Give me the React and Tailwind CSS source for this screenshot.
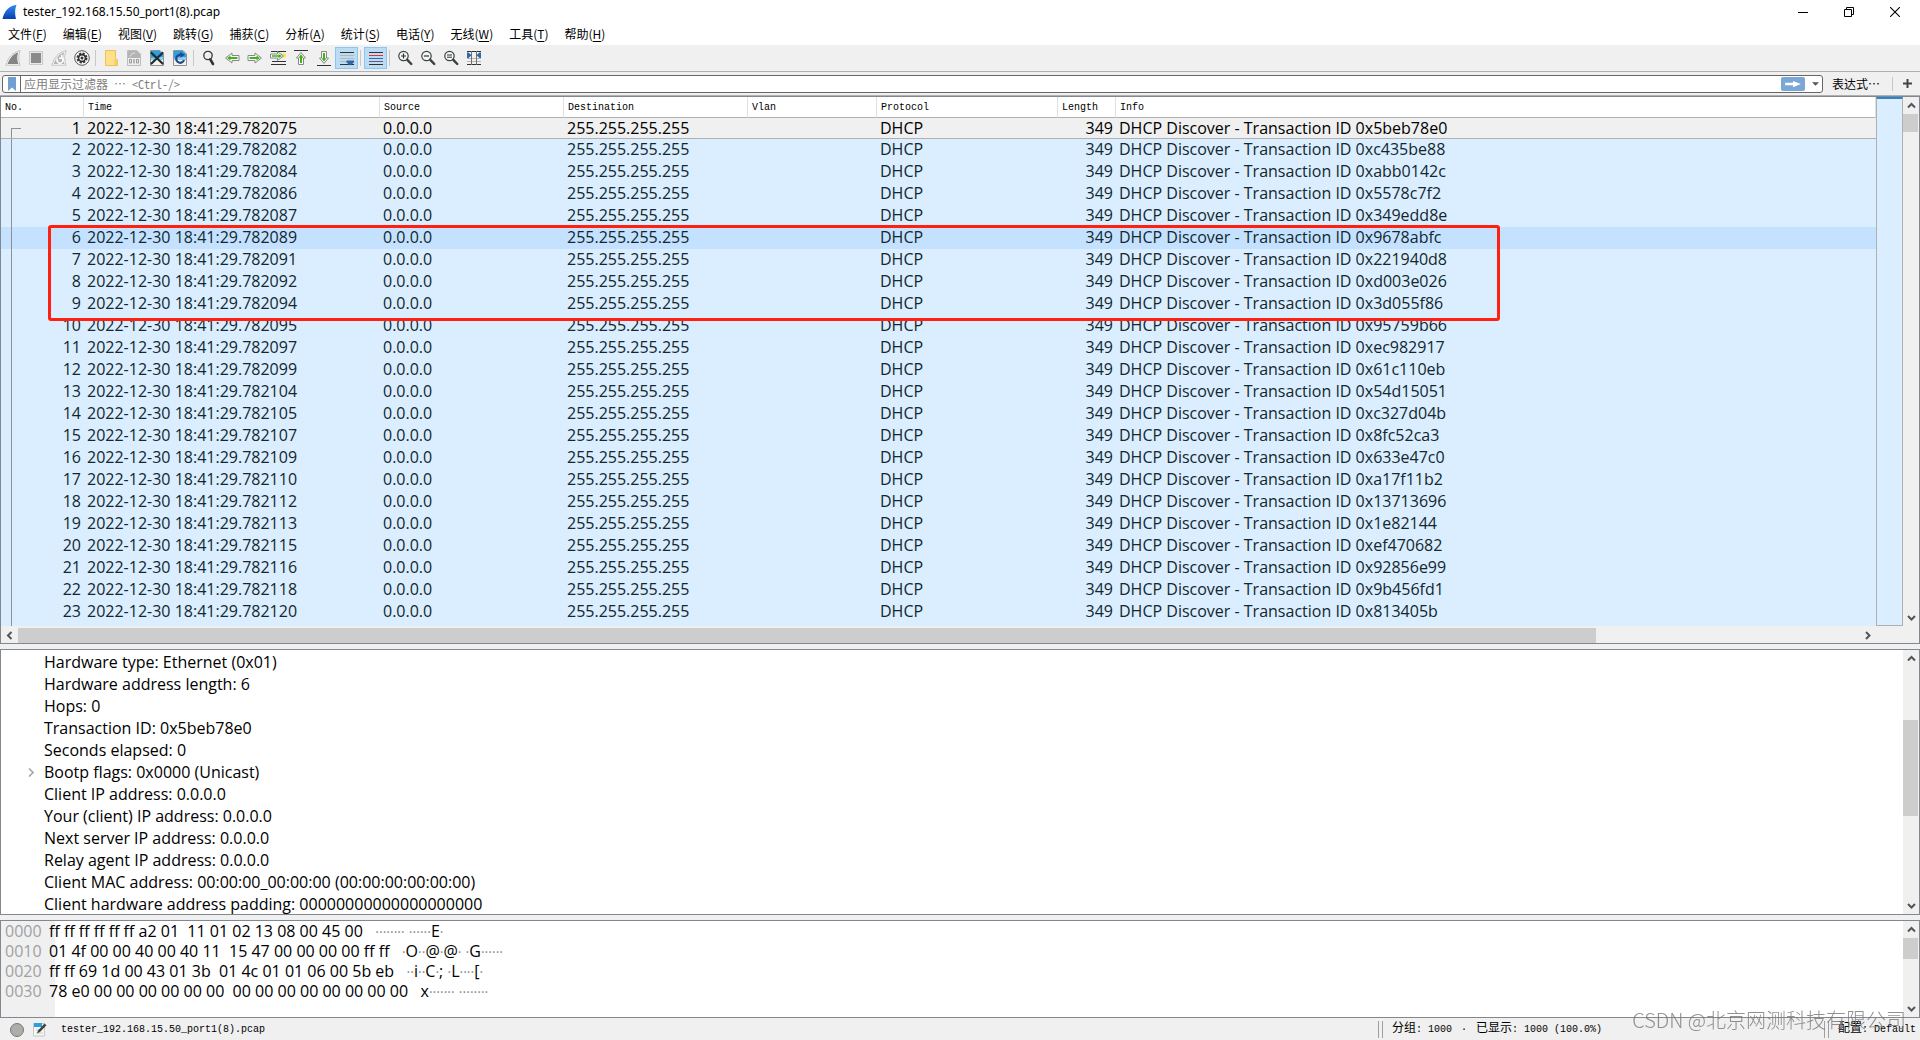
import React, { useState } from 'react';
import clsx from 'clsx';

const menus = [
    ['文件', 'F'], ['编辑', 'E'], ['视图', 'V'], ['跳转', 'G'], ['捕获', 'C'], ['分析', 'A'],
    ['统计', 'S'], ['电话', 'Y'], ['无线', 'W'], ['工具', 'T'], ['帮助', 'H'],
];

// [time fraction, transaction id]
const packets = [
    ['782075', '5beb78e0'], ['782082', 'c435be88'], ['782084', 'abb0142c'], ['782086', '5578c7f2'],
    ['782087', '349edd8e'], ['782089', '9678abfc'], ['782091', '221940d8'], ['782092', 'd003e026'],
    ['782094', '3d055f86'], ['782095', '95759b66'], ['782097', 'ec982917'], ['782099', '61c110eb'],
    ['782104', '54d15051'], ['782105', 'c327d04b'], ['782107', '8fc52ca3'], ['782109', '633e47c0'],
    ['782110', 'a17f11b2'], ['782112', '13713696'], ['782113', '1e82144'], ['782115', 'ef470682'],
    ['782116', '92856e99'], ['782118', '9b456fd1'], ['782120', '813405b'], ['782121', 'd4b1f7a6'],
];

const details = [
    'Hardware type: Ethernet (0x01)',
    'Hardware address length: 6',
    'Hops: 0',
    'Transaction ID: 0x5beb78e0',
    'Seconds elapsed: 0',
    'Bootp flags: 0x0000 (Unicast)',
    'Client IP address: 0.0.0.0',
    'Your (client) IP address: 0.0.0.0',
    'Next server IP address: 0.0.0.0',
    'Relay agent IP address: 0.0.0.0',
    'Client MAC address: 00:00:00_00:00:00 (00:00:00:00:00:00)',
    'Client hardware address padding: 00000000000000000000',
];

const bytes = [
    ['0000', 'ff ff ff ff ff ff a2 01  11 01 02 13 08 00 45 00', '········ ······E·'],
    ['0010', '01 4f 00 00 40 00 40 11  15 47 00 00 00 00 ff ff', '·O··@·@· ·G······'],
    ['0020', 'ff ff 69 1d 00 43 01 3b  01 4c 01 01 06 00 5b eb', '··i··C·; ·L····[·'],
    ['0030', '78 e0 00 00 00 00 00 00  00 00 00 00 00 00 00 00', 'x······· ········'],
];

const arrowRight = 'M1 6h7V3l7 5-7 5v-3H1z';
const magnifier = (
    <>
        <circle cx="6.5" cy="6" r="4.7" fill="#f4f6f6" stroke="#3a4244" strokeWidth="1.2" />
        <path d="M10.3 9.8l4 4.2" stroke="#3a3f40" strokeWidth="2.4" strokeLinecap="round" />
    </>
);
const page = (
    <>
        <path d="M1.500 .5h9.500l3.500 3.500v11.500h-13z" fill="#f4f4ec" stroke="#8d9496" />
        <path d="M2 1h9l3 3v6H2z" fill="#2b9fe0" />
        <path d="M2 8c4-1 8-1 12-1v3H2z" fill="#8fc8ea" />
    </>
);

const icons = {
    fin: (
        <>
            <path d="M.8 15.200C3 8 7 2.500 15.200.6c-2 4-2 9.500-.2 14.600z" fill="#fff" stroke="#c0c0c0" />
            <path d="M2.500 14C5 8 8 4 13.300 2.300c-1.400 3.700-1.400 7.700.2 11.700z" fill="#858585" />
        </>
    ),
    stop: (
        <>
            <path d="M1.500 1.500h13v13h-13z" fill="#e8e8e8" stroke="#c9c9c9" />
            <path d="M3 3h10v10H3z" fill="#8a8a8a" />
        </>
    ),
    restart: (
        <>
            <path d="M.8 15.200C3 8 7 2.500 15.200.6c-2 4-2 9.500-.2 14.600z" fill="#fff" stroke="#c0c0c0" />
            <path d="M2.500 14C5 8 8 4 13.300 2.300c-1.400 3.700-1.400 7.700.2 11.700z" fill="#b5b5b5" />
            <path d="M6.500 8.500a3 3 0 1 0 4.500-.7M10.800 4.800v3.400H8" fill="none" stroke="#fff" strokeWidth="1.500" />
        </>
    ),
    options: (
        <>
            <circle cx="8" cy="8" r="7.300" fill="#fafafa" stroke="#555" />
            <circle cx="8" cy="8" r="4.500" fill="none" stroke="#333" strokeWidth="2" strokeDasharray="2.200 1.330" />
            <circle cx="8" cy="8" r="3.400" fill="none" stroke="#333" strokeWidth="1.600" />
            <circle cx="8" cy="8" r="1.500" fill="#333" />
        </>
    ),
    open: (
        <>
            <path d="M2.500 .5h10v9h2v6h-12z" fill="#ffe08a" stroke="#e8c35a" />
            <path d="M11.500 15V9.500h3V15z" fill="#f6cf68" />
        </>
    ),
    save: (
        <>
            <path d="M1.500 .5h9.500l3.500 3.500v11.500h-13z" fill="#ededed" stroke="#bdbdbd" />
            <path d="M2 1h9l3 3v4H2z" fill="#b4b4b4" />
            <path d="M4 6.500c1-2.500 3-3.500 5-3.500" fill="none" stroke="#e8e8e8" />
            <path d="M3.500 9.500h2v3.500h-2zM10.500 9.500h2v3.500h-2z" fill="none" stroke="#9a9a9a" />
            <path d="M8 9v4.500" stroke="#9a9a9a" strokeWidth="1.300" />
        </>
    ),
    close: (
        <>
            {page}
            <path d="M2.500 3l11 10.500M13.500 3l-11 10.500" stroke="#1f2a30" strokeWidth="2.200" strokeLinecap="round" />
        </>
    ),
    reload: (
        <>
            {page}
            <path d="M12 10A4 4 0 1 1 9.500 5" fill="none" stroke="#1f4b8c" strokeWidth="2.200" />
            <path d="M8 2l5 2.800-4.500 3z" fill="#1f4b8c" />
        </>
    ),
    find: (
        <>
            <circle cx="7" cy="5.500" r="4.200" fill="#eceeee" stroke="#333a3c" strokeWidth="1.300" />
            <path d="M5 4.500a2.500 2.500 0 0 1 2.500-1.800" fill="none" stroke="#fff" />
            <path d="M9.300 9.300l2.700 4.700" stroke="#333" strokeWidth="2.600" strokeLinecap="round" />
        </>
    ),
    back: (
        <g transform="matrix(-1 0 0 1 16 0)">
            <path d="M1 5.500h7V3l6.500 5L8 13v-2.500H1z" fill="#fff" stroke="#888" />
            <path d="M2.500 7H9.500V5.500L13 8l-3.500 2.500V9H2.500z" fill="#43b31c" />
        </g>
    ),
    forward: (
        <>
            <path d="M1 5.500h7V3l6.500 5L8 13v-2.500H1z" fill="#fff" stroke="#888" />
            <path d="M2.500 7H9.500V5.500L13 8l-3.500 2.500V9H2.500z" fill="#43b31c" />
        </>
    ),
    goto: (
        <>
            <path d="M1 1.500h15M2 11.500h14M1 14.500h15" stroke="#2e3436" />
            <path d="M11 5.500h5" stroke="#fce94f" strokeWidth="4" />
            <path d="M.5 4h7V1.500l6 4.500-6 4.500V8h-7z" fill="#fff" stroke="#888" />
            <path d="M2 5.300h6.500V4L12 6 8.500 8.200V6.700H2z" fill="#43b31c" />
        </>
    ),
    first: (
        <>
            <path d="M1 .5h14" stroke="#2e3436" />
            <path d="M8 2.500l4.500 5.500h-2v6.500h-5V8h-2z" fill="#fff" stroke="#888" />
            <path d="M8 4.300l2.500 3.500H9V13H7V7.800H5.500z" fill="#43b31c" />
        </>
    ),
    last: (
        <>
            <path d="M1 15.500h14" stroke="#2e3436" />
            <path d="M8 13.500L3.500 8h2V1.500h5V8h2z" fill="#fff" stroke="#888" />
            <path d="M8 11.700L5.500 8.200H7V3h2v5.200h1.500z" fill="#43b31c" />
        </>
    ),
    autoscroll: (
        <>
            <path d="M1 2.500h14M1 14.500h14" stroke="#2e3436" />
            <path d="M1 5.500h14M1 8.500h14M1 11.500h7" stroke="#b4b8b4" />
            <path d="M7.500 10.500h7.500v2l-3.800 3L7.500 12.500z" fill="#3465a4" />
        </>
    ),
    colorize: (
        <>
            <path d="M1 2.500h14M1 14.500h14" stroke="#2e3436" />
            <path d="M1 5.500h14" stroke="#ef2929" />
            <path d="M1 8.500h14" stroke="#3465a4" />
            <path d="M1 11.500h14" stroke="#75507b" />
        </>
    ),
    zoomIn: <>{magnifier}<path d="M4 6h5M6.500 3.500v5" stroke="#2e3436" strokeWidth="1.200" /></>,
    zoomOut: <>{magnifier}<path d="M4 6h5" stroke="#2e3436" strokeWidth="1.200" /></>,
    zoomReset: <>{magnifier}<path d="M4 5h5M4 7.200h5" stroke="#2e3436" /></>,
    resize: (
        <>
            <path d="M1 1.500h14M1 14.500h14" stroke="#2e3436" />
            <path d="M1 8.500h14M1 11.500h14" stroke="#b4b8b4" />
            <path d="M5.500 1v14M10.500 1v14" stroke="#6d7274" />
            <path d="M1 2.500h1.500l3 2.750-3 2.750H1zM15 2.500h-1.500l-3 2.750 3 2.750H15z" fill="#3465a4" />
        </>
    ),
};

const toolbar = [
    'fin', 'stop', 'restart', 'options', '|', 'open', 'save', 'close', 'reload', '|',
    'find', 'back', 'forward', 'goto', 'first', 'last', 'autoscroll', '|', 'colorize', '|',
    'zoomIn', 'zoomOut', 'zoomReset', 'resize',
];

const chevrons = {
    up: 'M1 6.500l3.500-3.500L8 6.500',
    down: 'M1 3l3.500 3.500L8 3',
    left: 'M6.500 1L3 4.500L6.500 8',
    right: 'M3 1l3.500 3.500L3 8',
};

const ScrollButton = ({ dir }) => (
    <button type="button" aria-label={dir} className="flex size-[17px] shrink-0 items-center justify-center">
        <svg viewBox="0 0 9 9" className="size-[9px]">
            <path d={chevrons[dir]} fill="none" stroke="#555" strokeWidth="2" />
        </svg>
    </button>
);

const VerticalScroll = ({ offset, thumb }) => (
    <div className="flex w-4 shrink-0 flex-col items-center bg-[#f0f0f0]">
        <ScrollButton dir="up" />
        <div className="w-full grow pr-px">
            <div className={offset} />
            <div className={clsx('bg-[#cdcdcd]', thumb)} />
        </div>
        <ScrollButton dir="down" />
    </div>
);

const Grip = () => <span className="mr-[9px] h-[17px] w-[5px] shrink-0 border-x border-[#a0a0a0]" />;

const Cjk = ({ children }) => <span className="text-[12px]">{children}</span>;

const Ascii = ({ text }) => text.split(/(·+)/).map((part, i) => (
    part[0] === '·' ? <span key={i} className="text-sm leading-5 text-[#8c8c8c]">{part}</span> : part
));

const th = "h-[21px] border-b border-b-[#b0b0b0] border-r border-r-[#e0e0e0] pl-1 pt-0.5 text-left font-normal";

const PacketRow = ({ no, time, id, selected, hovered }) => (
    <tr
        className={clsx(
            'leading-5 [&>td]:align-top',
            selected ? 'h-[21px] bg-[#f0f0f0] text-black' : 'h-[22px] text-[#12272e]',
            !selected && (hovered ? 'bg-[#c4e2ff]' : 'bg-[#daeeff]'),
            selected && '[&>td]:border-b [&>td]:border-[#b0b0b0]',
        )}
    >
        <td>
            <div className={clsx('flex justify-between pl-[10px] pr-[3px]', selected ? 'h-5' : 'h-[22px]')}>
                <span className={clsx('w-[10px] border-l border-[#8a9296]', selected && 'mt-[10px] border-t')} />
                {no}
            </div>
        </td>
        <td className="pl-[3px]">2022-12-30 18:41:29.{time}</td>
        <td className="pl-[3px]">0.0.0.0</td>
        <td className="pl-[3px]">255.255.255.255</td>
        <td />
        <td className="pl-[3px]">DHCP</td>
        <td className="pr-[3px] text-right">349</td>
        <td className="pl-[3px]">DHCP Discover - Transaction ID 0x{id}</td>
    </tr>
);

const App = () => {
    const [filter, setFilter] = useState("");

    return (
        <div lang="zh-CN" className="flex h-screen flex-col overflow-hidden bg-[#f0f0f0] font-['Noto_Sans','Noto_Sans_CJK_SC',sans-serif] text-black">

            {/* Title bar */}
            <header className="flex h-[23px] shrink-0 items-center bg-white px-0.5 text-[12px]">
                <svg viewBox="0 0 16 16" className="mr-[5px] size-4">
                    <defs>
                        <linearGradient id="finFill" x1="0" y1="0" x2="0" y2="1">
                            <stop offset="0" stopColor="#2f8cf0" />
                            <stop offset="1" stopColor="#0a3fae" />
                        </linearGradient>
                    </defs>
                    <path d="M.5 15C2 8 6 2 14.500.8c-1.800 4.500-1.700 9.500-.5 14.200z" fill="url(#finFill)" />
                </svg>
                <h1 className="grow">tester_192.168.15.50_port1(8).pcap</h1>
                <button type="button" aria-label="Minimize" className="flex h-5 w-[46px] items-center justify-center">
                    <svg viewBox="0 0 10 10" className="size-[10px]"><path d="M0 5.500h10" stroke="#000" /></svg>
                </button>
                <button type="button" aria-label="Restore" className="flex h-5 w-[46px] items-center justify-center">
                    <svg viewBox="0 0 10 10" className="size-[10px]">
                        <path d="M.5 2.500h7v7h-7zM2.500 2.500v-2h7v7h-2" fill="none" stroke="#000" />
                    </svg>
                </button>
                <button type="button" aria-label="Close" className="flex h-5 w-[46px] items-center justify-center">
                    <svg viewBox="0 0 10 10" className="size-[10px]"><path d="M0 0l10 10M10 0L0 10" stroke="#000" strokeWidth="1.100" /></svg>
                </button>
            </header>

            {/* Menu */}
            <nav className="flex h-[23px] shrink-0 items-start border-b border-[#f0f0f0] bg-white font-['Noto_Sans_CJK_SC',sans-serif] text-[12px]">
                {menus.map(([label, key]) => (
                    <button key={key} type="button" className="px-2 leading-[22px]">
                        {label}(<u className="underline-offset-2">{key}</u>)
                    </button>
                ))}
            </nav>

            {/* Toolbar */}
            <div className="flex h-[26px] shrink-0 items-start border-b border-[#b0b0b0] pl-px pt-px">
                {toolbar.map((name, i) => (
                    name === '|' ? (
                        <span key={i} className="mx-[2px] mt-[3px] h-4 w-0.5 border-l border-[#c8c8c8]" />
                    ) : (
                        <button
                            key={i}
                            type="button"
                            aria-label={name}
                            className={clsx(
                                'flex h-[22px] w-[23px] items-center border pl-[3px]',
                                name === 'autoscroll' || name === 'colorize' ? 'border-[#8cc4f2] bg-[#bcdcf4]' : 'border-transparent',
                            )}
                        >
                            <svg viewBox="0 0 16 16" className="size-4">{icons[name]}</svg>
                        </button>
                    )
                ))}
            </div>

            {/* Display filter */}
            <div className="flex h-6 shrink-0 items-center border-b border-[#b0b0b0] pl-0.5 pr-2 text-[12px]">
                <div className="flex h-[18px] grow items-center rounded-[3px] border border-[#666] bg-white">
                    <button type="button" aria-label="Bookmarks" className="flex h-full w-[18px] items-center justify-center border-r border-[#666]">
                        <svg viewBox="0 0 8 14" className="h-[14px] w-2"><path d="M0 0h8v14L4 10.500 0 14z" fill="#729fcf" /></svg>
                    </button>
                    <input
                        type="text"
                        aria-label="应用显示过滤器"
                        value={filter}
                        onChange={(e) => setFilter(e.target.value)}
                        placeholder="应用显示过滤器 … <Ctrl-/>"
                        className="h-4 min-w-0 grow pl-[3px] font-['Noto_Sans_Mono_CJK_SC','Noto_Sans_CJK_SC',monospace] outline-none placeholder:text-[#808080]"
                    />
                    <button type="button" aria-label="Apply" className="flex h-[14px] w-6 items-center justify-center rounded-[2px] bg-[#7ba7d7]">
                        <svg viewBox="0 0 16 16" preserveAspectRatio="none" className="h-[10px] w-[18px]"><path d={arrowRight} fill="#fff" /></svg>
                    </button>
                    <button type="button" aria-label="History" className="flex w-[17px] justify-center pl-1">
                        <svg viewBox="0 0 8 4" className="h-1 w-[7px]"><path d="M0 0h8L4 4z" fill="#555" /></svg>
                    </button>
                </div>
                <button type="button" className="ml-[9px] mr-3 font-['Noto_Sans_CJK_SC',sans-serif] leading-4">表达式…</button>
                <span className="mr-[10px] h-[14px] border-l border-[#c8c8c8]" />
                <button type="button" aria-label="Add">
                    <svg viewBox="0 0 9 9" className="size-[9px]"><path d="M0 4.500h9M4.500 0v9" stroke="#444" strokeWidth="2" /></svg>
                </button>
            </div>

            <main className="flex min-h-0 grow flex-col gap-[5px] font-['Open_Sans',sans-serif] text-base leading-[22px]">
                {/* Packet list */}
                <section className="relative flex min-h-0 flex-[550] flex-col border border-[#828790]">
                    <div className="flex min-h-0 grow">
                        <div className="min-w-0 grow overflow-hidden bg-white">
                            <table className="w-full table-fixed border-separate border-spacing-0 whitespace-nowrap">
                                <thead className="bg-white font-['Liberation_Mono',monospace] text-[10px] leading-[18px]">
                                    <tr>
                                        <th className={clsx(th, 'w-[83px]')}>No.</th>
                                        <th className={clsx(th, 'w-[296px]')}>Time</th>
                                        <th className={clsx(th, 'w-[184px]')}>Source</th>
                                        <th className={clsx(th, 'w-[184px]')}>Destination</th>
                                        <th className={clsx(th, 'w-[129px]')}>Vlan</th>
                                        <th className={clsx(th, 'w-[181px]')}>Protocol</th>
                                        <th className={clsx(th, 'w-[58px]')}>Length</th>
                                        <th className={th}>Info</th>
                                    </tr>
                                </thead>
                                <tbody>
                                    {packets.map(([time, id], i) => (
                                        <PacketRow key={id} no={i + 1} time={time} id={id} selected={i === 0} hovered={i === 5} />
                                    ))}
                                </tbody>
                            </table>
                        </div>
                        <div className="w-[27px] shrink-0 border border-t-2 border-[#b0b0b0] border-t-[#2a86cc] bg-[#daeeff]" />
                        <VerticalScroll offset="h-0" thumb="h-[18px]" />
                    </div>
                    <div className="mt-px flex h-4 shrink-0 items-center pr-[43px]">
                        <ScrollButton dir="left" />
                        <div className="flex h-[15px] grow">
                            <div className="flex-[6] bg-[#cdcdcd]" />
                            <div className="flex-1" />
                        </div>
                        <ScrollButton dir="right" />
                    </div>
                    {/* Marked packets */}
                    <div className="pointer-events-none absolute left-[47px] top-32 h-24 w-[1452px] rounded-[3px] border-3 border-[#ff2010]" />
                </section>

                {/* Packet details */}
                <section className="flex min-h-0 flex-[265] border border-[#828790] bg-white">
                    <ul className="min-w-0 grow overflow-hidden pt-px">
                        {details.map((line) => (
                            <li key={line} className="flex h-[22px] items-center">
                                <span className="flex w-[43px] justify-end pr-[10px]">
                                    {line.startsWith('Bootp') && (
                                        <svg viewBox="0 0 6 9" className="h-[9px] w-[6px]">
                                            <path d="M1 .5l4 4-4 4" fill="none" stroke="#a6a6a6" strokeWidth="1.600" />
                                        </svg>
                                    )}
                                </span>
                                {line}
                            </li>
                        ))}
                    </ul>
                    <VerticalScroll offset="h-[53px]" thumb="h-24" />
                </section>

                {/* Packet bytes */}
                <section className="flex min-h-0 flex-[97] border border-[#828790] bg-white leading-5">
                    <div className="w-[54px] shrink-0 overflow-visible whitespace-pre bg-[#f0f0f0] pl-1">
                        {bytes.map(([offset, hex, ascii]) => (
                            <div key={offset} className="flex h-5">
                                <span className="w-11 shrink-0 text-[#a0a0a0]">{offset}</span>
                                <span>{hex}{'   '}<Ascii text={ascii} /></span>
                            </div>
                        ))}
                    </div>
                    <div className="grow" />
                    <VerticalScroll offset="h-0" thumb="h-[21px]" />
                </section>
            </main>

            {/* Status bar */}
            <footer className="flex h-[22px] shrink-0 items-center whitespace-pre pt-px font-['Liberation_Mono','Noto_Sans_CJK_SC',monospace] text-[10px] leading-5">
                <div className="flex grow items-center pl-[10px]">
                    <button type="button" aria-label="Expert info" className="mr-2 size-[14px] rounded-full border border-[#777] bg-[#acaea9]" />
                    <button type="button" aria-label="Comment" className="mr-[14px]">
                        <svg viewBox="0 0 15 15" className="size-[15px]">
                            <path d="M1.500 1.500h11v12.500h-11z" fill="#f8f8f4" stroke="#c4c8c8" />
                            <path d="M2 1h8v4H2z" fill="#2b9fe0" />
                            <path d="M4 8h6M4 11h7" stroke="#c9cccc" />
                            <path d="M5 11.500l1-3L12.500 1.500l2 1.800L8 10z" fill="#3c4446" />
                        </svg>
                    </button>
                    <span>tester_192.168.15.50_port1(8).pcap</span>
                </div>
                <div className="flex w-[446px] items-center">
                    <Grip />
                    <span><Cjk>分组</Cjk>: 1000 <span className="inline-block w-3 text-center">·</span> <Cjk>已显示</Cjk>: 1000 (100.0%)</span>
                </div>
                <div className="flex w-24 items-center">
                    <Grip />
                    <span><Cjk>配置</Cjk>: Default</span>
                </div>
            </footer>

            {/* Watermark */}
            <div className="pointer-events-none fixed bottom-1 right-[14px] font-['Noto_Sans_CJK_SC',sans-serif] text-xl font-light leading-8 text-[#777]/80">
                CSDN @北京网测科技有限公司
            </div>
        </div>
    )
}

export default App
